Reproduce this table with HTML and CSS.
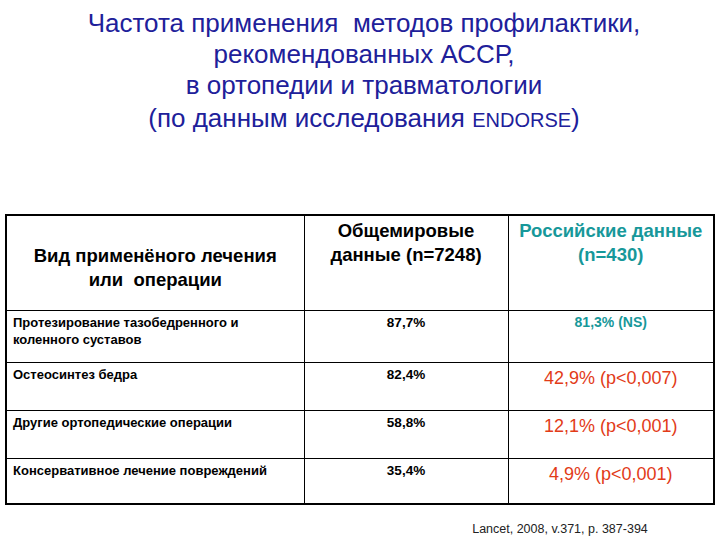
FILE: index.html
```html
<!DOCTYPE html>
<html lang="ru">
<head>
<meta charset="utf-8">
<title>Частота применения методов профилактики</title>
<link rel="stylesheet" href="styles.css">
</head>
<body>
<div class="title">
  <div>Частота применения&nbsp; методов профилактики,</div>
  <div>рекомендованных АССР,</div>
  <div>в ортопедии и травматологии</div>
  <div class="last">(по данным исследования <span class="small-caps">ENDORSE</span>)</div>
</div>
<table class="data">
  <colgroup>
    <col class="c1">
    <col class="c2">
    <col class="c3">
  </colgroup>
  <tr class="head">
    <th class="h1">Вид применёного лечения<br>или&nbsp; операции</th>
    <th class="h2">Общемировые<br>данные (n=7248)</th>
    <th class="h3 teal">Российские данные<br>(n=430)</th>
  </tr>
  <tr class="r1">
    <td class="name">Протезирование тазобедренного и<br>коленного суставов</td>
    <td class="val">87,7%</td>
    <td class="ru teal">81,3% (NS)</td>
  </tr>
  <tr class="r2">
    <td class="name">Остеосинтез бедра</td>
    <td class="val">82,4%</td>
    <td class="ru big red">42,9% (p&lt;0,007)</td>
  </tr>
  <tr class="r3">
    <td class="name">Другие ортопедические операции</td>
    <td class="val">58,8%</td>
    <td class="ru big red">12,1% (p&lt;0,001)</td>
  </tr>
  <tr class="r4">
    <td class="name">Консервативное лечение повреждений</td>
    <td class="val">35,4%</td>
    <td class="ru big red">4,9% (p&lt;0,001)</td>
  </tr>
</table>
<div class="cite">Lancet, 2008, v.371, p. 387-394</div>
</body>
</html>
```
FILE: styles.css
```css
html, body {
  margin: 0;
  padding: 0;
  background: #fff;
}
body {
  font-family: "Liberation Sans", Arial, sans-serif;
  width: 720px;
  height: 540px;
  overflow: hidden;
}
.title {
  padding-top: 8px;
  margin-left: 8px;
  text-align: center;
  color: #20209a;
  font-size: 26px;
  line-height: 31px;
}
.title .last {
  padding-top: 2px;
}
.small-caps {
  font-size: 20px;
}
.data {
  margin: 78px 0 0 5px;
  width: 708px;
  border-collapse: collapse;
  table-layout: fixed;
  border: 2px solid #000;
}
.c1 { width: 298px; }
.c2 { width: 204px; }
.c3 { width: 206px; }
.data th, .data td {
  border: 1px solid #000;
  padding: 0;
  vertical-align: top;
  text-align: center;
}
.head { height: 95px; }
.r1 { height: 52px; }
.r2 { height: 48px; }
.r3 { height: 48px; }
.r4 { height: 46px; }
.data th {
  font-size: 18.5px;
  line-height: 24px;
  font-weight: bold;
  color: #000;
}
.data th.h1 {
  padding-top: 28px;
}
.data th.h2, .data th.h3 {
  padding-top: 3px;
}
.teal { color: #17989a; }
.data th.teal { color: #17989a; }
.red { color: #e23b18; }
.name {
  text-align: left !important;
  font-size: 13px;
  font-weight: bold;
  line-height: 17px;
  padding: 3px 0 0 6px !important;
  color: #000;
}
.val {
  font-size: 13.5px;
  font-weight: bold;
  line-height: 17px;
  padding-top: 3px !important;
}
.ru {
  font-size: 14px;
  font-weight: bold;
  line-height: 17px;
  padding-top: 3px !important;
}
.ru.big {
  font-size: 18px;
  font-weight: normal;
  line-height: 24px;
  padding-top: 3px !important;
}
.cite {
  margin: 17px 0 0 440px;
  width: 240px;
  text-align: center;
  font-size: 12.5px;
  color: #222;
}
```
